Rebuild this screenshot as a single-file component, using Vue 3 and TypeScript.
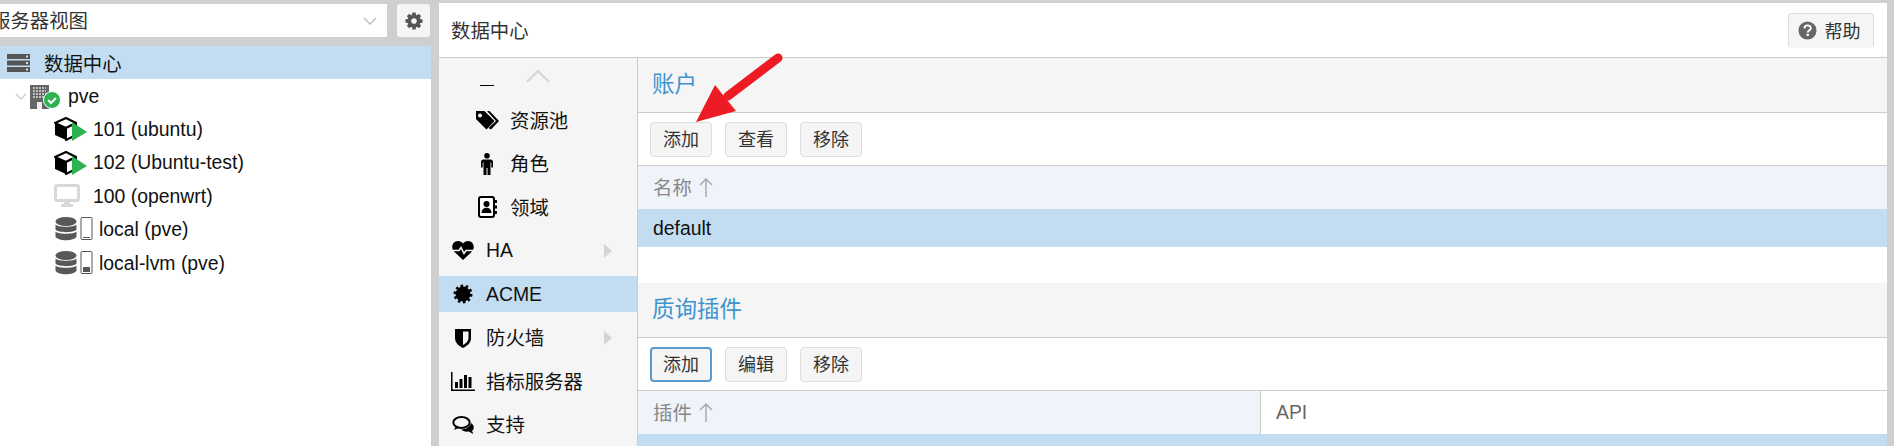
<script setup lang="ts">
type TreeRow = {
  label: string;
  kind: "server" | "node" | "ct" | "vm" | "local" | "lvm";
  depth: number;
  selected?: boolean;
};

type NavRow = {
  label: string;
  icon: string;
  sub?: boolean;
  active?: boolean;
  more?: boolean;
};

const treeRows: TreeRow[] = [
  { label: "数据中心", kind: "server", depth: 0, selected: true },
  { label: "pve", kind: "node", depth: 1 },
  { label: "101 (ubuntu)", kind: "ct", depth: 2 },
  { label: "102 (Ubuntu-test)", kind: "ct", depth: 2 },
  { label: "100 (openwrt)", kind: "vm", depth: 2 },
  { label: "local (pve)", kind: "local", depth: 2 },
  { label: "local-lvm (pve)", kind: "lvm", depth: 2 },
];

const navRows: NavRow[] = [
  { label: "资源池", icon: "tags", sub: true },
  { label: "角色", icon: "male", sub: true },
  { label: "领域", icon: "book", sub: true },
  { label: "HA", icon: "heart", more: true },
  { label: "ACME", icon: "cert", active: true },
  { label: "防火墙", icon: "shield", more: true },
  { label: "指标服务器", icon: "chart" },
  { label: "支持", icon: "comments" },
];

// CJK glyphs sit a little low in the fallback font
const isCjk = (text: string) => /[^\x00-\x7f]/.test(text);
</script>

<template>
  <div class="page">
    <aside class="side">
      <div class="side-top">
        <div class="view-select">
          <span class="view-text">服务器视图</span>
          <svg class="select-chev" viewBox="0 0 14 8" width="14" height="8">
            <path d="M1 1l6 6 6-6" fill="none" stroke="#c4c4c4" stroke-width="1.6" />
          </svg>
        </div>
        <button class="gear-btn" type="button" aria-label="设置">
          <svg viewBox="0 0 1792 1792" width="20" height="20">
            <path fill="#555" fill-rule="evenodd" d="M1152 896q0-106-75-181t-181-75-181 75-75 181 75 181 181 75 181-75 75-181zm512-109v222q0 12-8 23t-20 13l-185 28q-19 54-39 91 35 50 107 138 10 12 10 25t-9 23q-27 37-99 108t-94 71q-12 0-26-9l-138-108q-44 23-91 38-16 136-29 186-7 28-36 28h-222q-14 0-24.500-8.500t-11.500-21.500l-28-184q-49-16-90-37l-141 107q-10 9-25 9-14 0-25-11-126-114-165-168-7-10-7-23 0-12 8-23 15-21 51-66.500t54-70.500q-27-50-41-99l-183-27q-13-2-21-12.500t-8-23.500v-222q0-12 8-23t19-13l186-28q14-46 39-92-40-57-107-138-10-12-10-24 0-10 9-23 26-36 98.500-107.500t94.500-71.500q13 0 26 10l138 107q44-23 91-38 16-136 29-186 7-28 36-28h222q14 0 24.500 8.500t11.500 21.500l28 184q49 16 90 37l142-107q9-9 24-9 13 0 25 10 129 119 165 170 7 8 7 22 0 12-8 23-15 21-51 66.500t-54 70.500q26 50 41 98l183 28q13 2 21 12.500t8 23.500z" />
          </svg>
        </button>
      </div>
      <ul class="tree">
        <li
          v-for="row in treeRows"
          :key="row.label"
          class="tree-row"
          :class="[`depth-${row.depth}`, { selected: row.selected }]"
        >
          <svg v-if="row.depth < 2" class="tree-chev" viewBox="0 0 12 7" width="12" height="7">
            <path d="M1 1l5 5 5-5" fill="none" stroke="#c8c8c8" stroke-width="1.2" />
          </svg>
          <span class="tree-icon" :class="{ wide: row.kind === 'local' || row.kind === 'lvm' }">
            <svg v-if="row.kind === 'server'" viewBox="0 0 23 18" width="23" height="18">
              <g fill="#555">
                <rect y="0" width="23" height="5" />
                <rect y="6.500" width="23" height="5" />
                <rect y="13" width="23" height="5" />
              </g>
              <g fill="#ddd">
                <rect x="19" y="1.500" width="2" height="2" />
                <rect x="19" y="8" width="2" height="2" />
                <rect x="19" y="14.500" width="2" height="2" />
              </g>
            </svg>
            <svg v-else-if="row.kind === 'node'" viewBox="0 0 31 25" width="31" height="25">
              <rect x="0" y="1" width="19" height="24" fill="#666" />
              <path d="M3 4h13M3 7h13M3 10h13M3 13h13" stroke="#ddd" stroke-width="1.500" stroke-dasharray="2 1" />
              <rect x="7" y="18" width="5" height="7" fill="#eee" />
              <circle cx="22" cy="16" r="8.500" fill="#2cb24f" stroke="#fff" stroke-width="1" />
              <path d="M18 16l3 3 5-5" fill="none" stroke="#fff" stroke-width="2" />
            </svg>
            <svg v-else-if="row.kind === 'ct'" viewBox="0 0 33 24" width="33" height="24">
              <path d="M1 6l11 5v12l-11-5z" fill="#000" />
              <path d="M12 1l10 5-10 5-11-5z" fill="#fff" stroke="#000" stroke-width="2" stroke-linejoin="round" />
              <path d="M12 11l10-5v12l-10 5z" fill="#fff" stroke="#000" stroke-width="2" stroke-linejoin="round" />
              <path d="M18 5l15 10-15 9z" fill="#2cb24f" />
            </svg>
            <svg v-else-if="row.kind === 'vm'" viewBox="0 0 27 24" width="27" height="24">
              <rect x="1.500" y="1.500" width="23" height="15" rx="1.500" fill="#fff" stroke="#d8d8d8" stroke-width="3" />
              <path d="M10 18h6v2h3v3H7v-3h3z" fill="#d8d8d8" />
            </svg>
            <svg v-else viewBox="0 0 39 25" width="39" height="25">
              <g fill="#585858">
                <ellipse cx="12" cy="4.500" rx="10.500" ry="4.500" />
                <path d="M1.500 7.500c2 3 19 3 21 0v5c-2 3.500-19 3.500-21 0z" />
                <path d="M1.500 14.500c2 3 19 3 21 0v5c-2 5-19 5-21 0z" />
              </g>
              <rect x="27" y="0.500" width="11" height="22" rx="1" fill="#fff" stroke="#555" stroke-width="1" />
              <rect v-if="row.kind === 'lvm'" x="29" y="16" width="7" height="5" fill="#555" />
              <rect v-else x="29" y="20" width="7" height="1" fill="#555" />
            </svg>
          </span>
          <span>{{ row.label }}</span>
        </li>
      </ul>
    </aside>

    <main class="panel">
      <header class="panel-head">
        <span class="lift">数据中心</span>
        <button class="btn help-btn" type="button">
          <svg viewBox="0 0 20 20" width="19" height="19">
            <circle cx="10" cy="10" r="9.500" fill="#666" />
            <path d="M6.800 7.800c0-4.300 6.600-4.200 6.600-.3 0 2.500-3.200 2.400-3.200 4.500" fill="none" stroke="#fff" stroke-width="2" />
            <rect x="9" y="13.400" width="2.400" height="2.400" fill="#fff" />
          </svg>
          帮助
        </button>
      </header>

      <div class="panel-body">
        <nav class="nav">
          <svg class="nav-up" viewBox="0 0 24 14" width="24" height="14">
            <path d="M1 13L12 2l11 11" fill="none" stroke="#d4d4d4" stroke-width="2" />
          </svg>
          <span class="nav-cut"></span>
          <div
            v-for="item in navRows"
            :key="item.label"
            class="nav-row"
            :class="{ sub: item.sub, active: item.active }"
          >
            <span class="nav-icon">
              <svg v-if="item.icon === 'tags'" viewBox="0 0 24 21" width="24" height="21">
                <path fill-rule="evenodd" d="M1 1h8.500l10 10-8 8.500L1 9zM5 3.500a2 2 0 1 0 0 4 2 2 0 0 0 0-4z" />
                <path d="M12 1h2.500l9.500 10-8 8.500-2.500-1.500 7.500-7z" />
              </svg>
              <svg v-else-if="item.icon === 'male'" viewBox="0 0 12 22" width="12" height="22">
                <circle cx="6" cy="2.800" r="2.800" />
                <path d="M2.500 6.500h7A2.500 2.500 0 0 1 12 9v5.500h-1.700V9.500h-.8V22H6.500v-7h-1v7H2.500V9.500h-.8v5H0V9a2.500 2.500 0 0 1 2.500-2.500z" />
              </svg>
              <svg v-else-if="item.icon === 'book'" viewBox="0 0 19 22" width="19" height="22">
                <rect x="1" y="1" width="15" height="20" rx="2" fill="#fff" stroke="#000" stroke-width="2" />
                <circle cx="8.500" cy="8" r="3" />
                <path d="M3.500 17c0-7 10-7 10 0z" />
                <path d="M17 4h2v3h-2zM17 9.500h2v3h-2zM17 15h2v3h-2z" />
              </svg>
              <svg v-else-if="item.icon === 'heart'" viewBox="0 0 22 19" width="22" height="19">
                <path d="M11 19L2 10.500C-1.500 6.500.5 0 6 0c2 0 4 1 5 2.500C12 1 14 0 16 0c5.500 0 7.500 6.500 4 10.500z" />
                <path d="M1 9.500h6l2-3 3 6 2-3h7" fill="none" stroke="#f5f5f5" stroke-width="1.600" />
              </svg>
              <svg v-else-if="item.icon === 'cert'" viewBox="0 0 20 20" width="20" height="20">
                <circle cx="10" cy="10" r="7.500" />
                <circle cx="10" cy="10" r="8.300" fill="none" stroke="#000" stroke-width="2.400" stroke-dasharray="2.600 2.600" />
              </svg>
              <svg v-else-if="item.icon === 'shield'" viewBox="0 0 16 20" width="16" height="20">
                <path d="M0 1h16v9c0 5-4 8-8 10-4-2-8-5-8-10z" />
                <path d="M8 3.500h5.500V10c0 3.500-3 5.500-5.500 7z" fill="#f5f5f5" />
              </svg>
              <svg v-else-if="item.icon === 'chart'" viewBox="0 0 24 19" width="24" height="19">
                <path d="M0 0h1.500v17.500H24V19H0z" />
                <path d="M4 10h3v6H4zM8.500 7h3v9h-3zM13 3h3v13h-3zM17.500 5h3v11h-3z" />
              </svg>
              <svg v-else viewBox="0 0 22 18" width="22" height="18">
                <ellipse cx="9.500" cy="6.500" rx="8.200" ry="5.500" fill="none" stroke="#000" stroke-width="2" />
                <path d="M4 10l-2 4 6-2.500zM19 7c4 3 3 6 1 8l1.500 3-5-2.500c-3 .5-6-.5-7.500-2 4 0 9-2 10-6.500z" />
              </svg>
            </span>
            <span :class="{ lift: isCjk(item.label) }">{{ item.label }}</span>
            <i v-if="item.more" class="nav-more"></i>
          </div>
        </nav>

        <section class="content">
          <h2 class="section-title">账户</h2>
          <div class="toolbar">
            <button class="btn" type="button">添加</button>
            <button class="btn" type="button">查看</button>
            <button class="btn" type="button">移除</button>
          </div>
          <div class="grid-head">
            <span class="col lift">
              名称
              <svg class="sort" viewBox="0 0 14 20" width="14" height="20">
                <path d="M7 20V2M1 8l6-6 6 6" fill="none" stroke="#aaa" stroke-width="1.500" />
              </svg>
            </span>
          </div>
          <div class="grid-row first">default</div>
          <div class="grid-space"></div>

          <h2 class="section-title">质询插件</h2>
          <div class="toolbar">
            <button class="btn focused" type="button">添加</button>
            <button class="btn" type="button">编辑</button>
            <button class="btn" type="button">移除</button>
          </div>
          <div class="grid-head split">
            <span class="col plugin lift">
              插件
              <svg class="sort" viewBox="0 0 14 20" width="14" height="20">
                <path d="M7 20V2M1 8l6-6 6 6" fill="none" stroke="#aaa" stroke-width="1.500" />
              </svg>
            </span>
            <span class="col api">API</span>
          </div>
          <div class="grid-row"></div>
        </section>
      </div>
    </main>

    <svg class="annot-arrow" viewBox="0 0 100 80" width="100" height="80" aria-hidden="true">
      <path d="M90 8L40 46" fill="none" stroke="#ed1c24" stroke-width="9" stroke-linecap="round" />
      <path d="M8 72L27 35l21 26z" fill="#ed1c24" />
    </svg>
  </div>
</template>

<style scoped>
.page {
  position: relative;
  display: flex;
  gap: 8px;
  height: 446px;
  padding: 3px 7px 0 0;
  box-sizing: border-box;
  overflow: hidden;
  background: #cfcfcf;
  color: #111;
  font-family: "Liberation Sans", "Noto Sans CJK SC", sans-serif;
  font-size: 19.4px;
}

.lift {
  padding-bottom: 2px;
}

.side {
  display: flex;
  flex-direction: column;
  flex: 0 0 431px;
  width: 431px;
}

.side-top {
  display: flex;
  gap: 10px;
  height: 33px;
  margin-top: 1px;
  width: 430px;
}

.view-select {
  display: flex;
  flex: 1;
  align-items: center;
  justify-content: space-between;
  padding-right: 10px;
  overflow: hidden;
  background: #fff;
  color: #333;
}

.view-text {
  margin-left: -9px;
  padding-bottom: 2px;
}

.gear-btn {
  display: flex;
  align-items: center;
  justify-content: center;
  width: 33px;
  padding: 0;
  border: none;
  border-radius: 3px;
  background: #f5f5f5;
}

.tree {
  flex: 1;
  margin: 9px 0 0;
  padding: 0;
  list-style: none;
  background: #fff;
}

.tree-row {
  display: flex;
  align-items: center;
  height: 33.4px;
}

.tree-row.selected {
  background: #c2ddf2;
}

.depth-0 {
  padding-left: 0;
}

.depth-0 .tree-chev {
  width: 4px;
  margin-right: 3px;
}

.depth-1 {
  padding-left: 15px;
}

.depth-1 .tree-chev {
  margin-right: 3px;
}

.depth-2 {
  padding-left: 54px;
}

.tree-icon {
  display: flex;
  align-items: center;
  width: 38px;
}

.depth-0 .tree-icon {
  width: 37px;
}

.depth-2 .tree-icon {
  width: 39px;
}

.tree-icon.wide {
  width: 45px;
}

.panel {
  display: flex;
  flex: 1;
  flex-direction: column;
  min-width: 0;
  background: #fff;
}

.panel-head {
  display: flex;
  flex: 0 0 55px;
  align-items: center;
  justify-content: space-between;
  box-sizing: border-box;
  padding: 0 13px 0 12px;
  border-bottom: 1px solid #ccc;
  color: #333;
}

.panel-body {
  display: flex;
  flex: 1;
  min-height: 0;
}

.nav {
  position: relative;
  flex: 0 0 198px;
  padding-top: 27px;
  overflow: hidden;
  border-right: 1px solid #ccc;
  background: #f5f5f5;
}

.nav-up {
  position: absolute;
  top: 11px;
  left: 87px;
}

.nav-cut {
  display: block;
  width: 14px;
  height: 1px;
  margin: 0 0 16px 41px;
  background: #000;
}

.nav-row {
  display: flex;
  align-items: center;
  height: 36px;
  margin-bottom: 7.500px;
  padding-left: 12px;
}

.nav-row.sub {
  padding-left: 36px;
}

.nav-row.active {
  background: #c2ddf2;
}

.nav-icon {
  display: flex;
  flex: 0 0 24px;
  align-items: center;
  justify-content: center;
  margin-right: 11px;
}

.nav-more {
  width: 0;
  height: 0;
  margin-left: auto;
  margin-right: 25px;
  border-top: 7px solid transparent;
  border-bottom: 7px solid transparent;
  border-left: 8px solid #d4d4d4;
}

.content {
  flex: 1;
  min-width: 0;
}

.section-title {
  box-sizing: border-box;
  height: 55px;
  margin: 0;
  padding: 0 14px;
  border-bottom: 1px solid #ccc;
  background: #f5f5f5;
  color: #3f94cf;
  font-size: 22.5px;
  font-weight: 400;
  line-height: 54px;
}

.toolbar {
  display: flex;
  align-items: center;
  gap: 13px;
  box-sizing: border-box;
  height: 52px;
  padding: 0 12px;
  background: #fff;
}

.btn {
  display: inline-flex;
  align-items: center;
  justify-content: center;
  box-sizing: border-box;
  width: 62px;
  height: 35px;
  padding: 0 0 2px;
  border: 1px solid #ddd;
  border-radius: 4px;
  background: #f5f5f5;
  color: #333;
  font-family: inherit;
  font-size: 18px;
}

.btn.focused {
  border: 2px solid #5a9bcf;
}

.help-btn {
  gap: 8px;
  width: 86px;
  padding: 0 4px 0 0;
  border-bottom-color: transparent;
}

.grid-head {
  display: flex;
  box-sizing: border-box;
  height: 44px;
  border-top: 1px solid #ccc;
  background: #eff4fa;
  color: #888;
}

.col {
  display: flex;
  align-items: center;
  gap: 7px;
  box-sizing: border-box;
  padding-left: 15px;
}

.plugin {
  flex: 0 0 623px;
  border-right: 1px solid #ccc;
}

.api {
  flex: 1;
  background: #fff;
  color: #666;
}

.grid-row {
  box-sizing: border-box;
  height: 38px;
  padding-left: 15px;
  background: #c2ddf2;
  color: #111;
  line-height: 38px;
}

.grid-space {
  height: 36px;
  background: #fff;
}

.annot-arrow {
  position: absolute;
  top: 50px;
  left: 688px;
}
</style>

<style>
html,
body {
  margin: 0;
  padding: 0;
}
</style>
